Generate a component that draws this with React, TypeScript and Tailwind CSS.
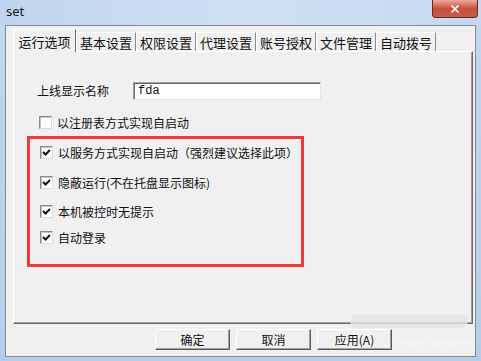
import { X } from 'lucide-react'

const tabs = ['运行选项', '基本设置', '权限设置', '代理设置', '账号授权', '文件管理', '自动拨号']

function CheckBox({ checked }: { checked: boolean }) {
  return (
    <span className="w-[13px] h-[13px] shrink-0 bg-white border border-t-[#8c8c8c] border-l-[#8c8c8c] border-r-[#dcdcdc] border-b-[#dcdcdc] shadow-[inset_1px_1px_0_#c4c4c4] flex items-center justify-center">
      {checked && (
        <svg width="9" height="9" viewBox="0 0 9 9">
          <path d="M1 4 L3.5 6.5 L8 2" stroke="#111" strokeWidth="2" fill="none" />
        </svg>
      )}
    </span>
  )
}

function Option({ label, checked }: { label: string; checked: boolean }) {
  return (
    <div className="flex items-center gap-[5px] h-[13px]">
      <CheckBox checked={checked} />
      <span className="text-[12px] leading-none text-[#111] whitespace-nowrap">{label}</span>
    </div>
  )
}

function Button({ children }: { children: React.ReactNode }) {
  return (
    <button className="w-[75px] h-[21px] bg-[#f0f0f0] border border-t-white border-l-white border-r-[#5a5a5a] border-b-[#5a5a5a] shadow-[inset_-1px_-1px_0_#a0a0a0] text-[12px] leading-none text-[#111]">
      {children}
    </button>
  )
}

export default function App() {
  return (
    <div className="relative w-[481px] h-[361px] overflow-hidden flex flex-col bg-gradient-to-b from-[#c3d7ef] to-[#b7cce6] font-['Noto_Sans_CJK_SC','Noto_Sans',sans-serif]">
      {/* title bar */}
      <div className="relative h-[25px] shrink-0 flex items-center pl-[6px] bg-gradient-to-r from-[#bfd4ee] via-[#cfe0f4] to-[#c6d9f0]">
        <span className="text-[13px] leading-none text-[#1a1a1a] font-['Noto_Sans',sans-serif] -mt-[2px]">set</span>
        <div className="absolute right-[3px] top-0 w-[46px] h-[18px] rounded-b-[4px] border border-t-0 border-[#6e2a22] bg-gradient-to-b from-[#e9a99b] via-[#c9503d] to-[#c45a45] flex items-center justify-center">
          <X size={12} strokeWidth={3.5} className="text-white" />
        </div>
      </div>

      {/* client area */}
      <div className="mx-[5px] mb-[4px] flex-1 bg-[#f0f0f0] border border-[#7d8a9a] pt-[4px] pl-[7px]">
        {/* tab strip */}
        <div className="flex items-end h-[21px]">
          {tabs.map((t, i) =>
            i === 0 ? (
              <div
                key={t}
                className="relative z-10 -mb-px h-[23px] w-[63px] bg-[#f0f0f0] border border-b-0 border-t-white border-l-white border-r-[#696969] flex items-center justify-center text-[13px] leading-none text-[#111]"
              >
                {t}
              </div>
            ) : (
              <div
                key={t}
                className="h-[19px] w-[60px] border border-b-0 border-t-white border-l-white border-r-[#8a8a8a] flex items-center justify-center text-[13px] leading-none text-[#111]"
              >
                {t}
              </div>
            )
          )}
        </div>

        {/* panel */}
        <div className="w-[460px] h-[273px] border border-t-white border-l-white border-r-[#696969] border-b-[#696969] shadow-[inset_-1px_-1px_0_#a0a0a0] pl-[13px] pt-[30px]">
          <div className="flex items-center h-[18px] ml-[10px]">
            <span className="w-[96px] text-[12px] leading-none text-[#111]">上线显示名称</span>
            <div className="w-[188px] h-[18px] bg-white border border-t-[#a0a0a0] border-l-[#a0a0a0] border-r-[#e3e3e3] border-b-[#e3e3e3] shadow-[inset_1px_1px_0_#696969] flex items-center pl-[4px] text-[12px] leading-none font-['Liberation_Mono',monospace] text-[#111]">
              fda
            </div>
          </div>

          <div className="mt-[16px] ml-[12px]">
            <Option label="以注册表方式实现自启动" checked={false} />
          </div>

          <div className="mt-[7px] w-[277px] h-[131px] border-[3px] border-[#ef3a3a] pl-[10px] pt-[7px]">
            <Option label="以服务方式实现自启动（强烈建议选择此项）" checked />
            <div className="mt-[17px]">
              <Option label="隐蔽运行(不在托盘显示图标)" checked />
            </div>
            <div className="mt-[16px]">
              <Option label="本机被控时无提示" checked />
            </div>
            <div className="mt-[13px]">
              <Option label="自动登录" checked />
            </div>
          </div>
        </div>

        {/* dialog buttons */}
        <div className="flex gap-[6px] mt-[5px] ml-[142px]">
          <Button>确定</Button>
          <Button>取消</Button>
          <Button>应用(A)</Button>
        </div>
      </div>

      {/* watermark */}
      <div className="absolute left-[350px] top-[315px] w-[118px] h-[13px] rounded-full bg-[#e4e4e4]/80" />
      <div className="absolute left-[397px] top-[337px] text-[10px] leading-none text-white/70 font-['Liberation_Serif',serif]">
        jingyan.baidu.com
      </div>
    </div>
  )
}
